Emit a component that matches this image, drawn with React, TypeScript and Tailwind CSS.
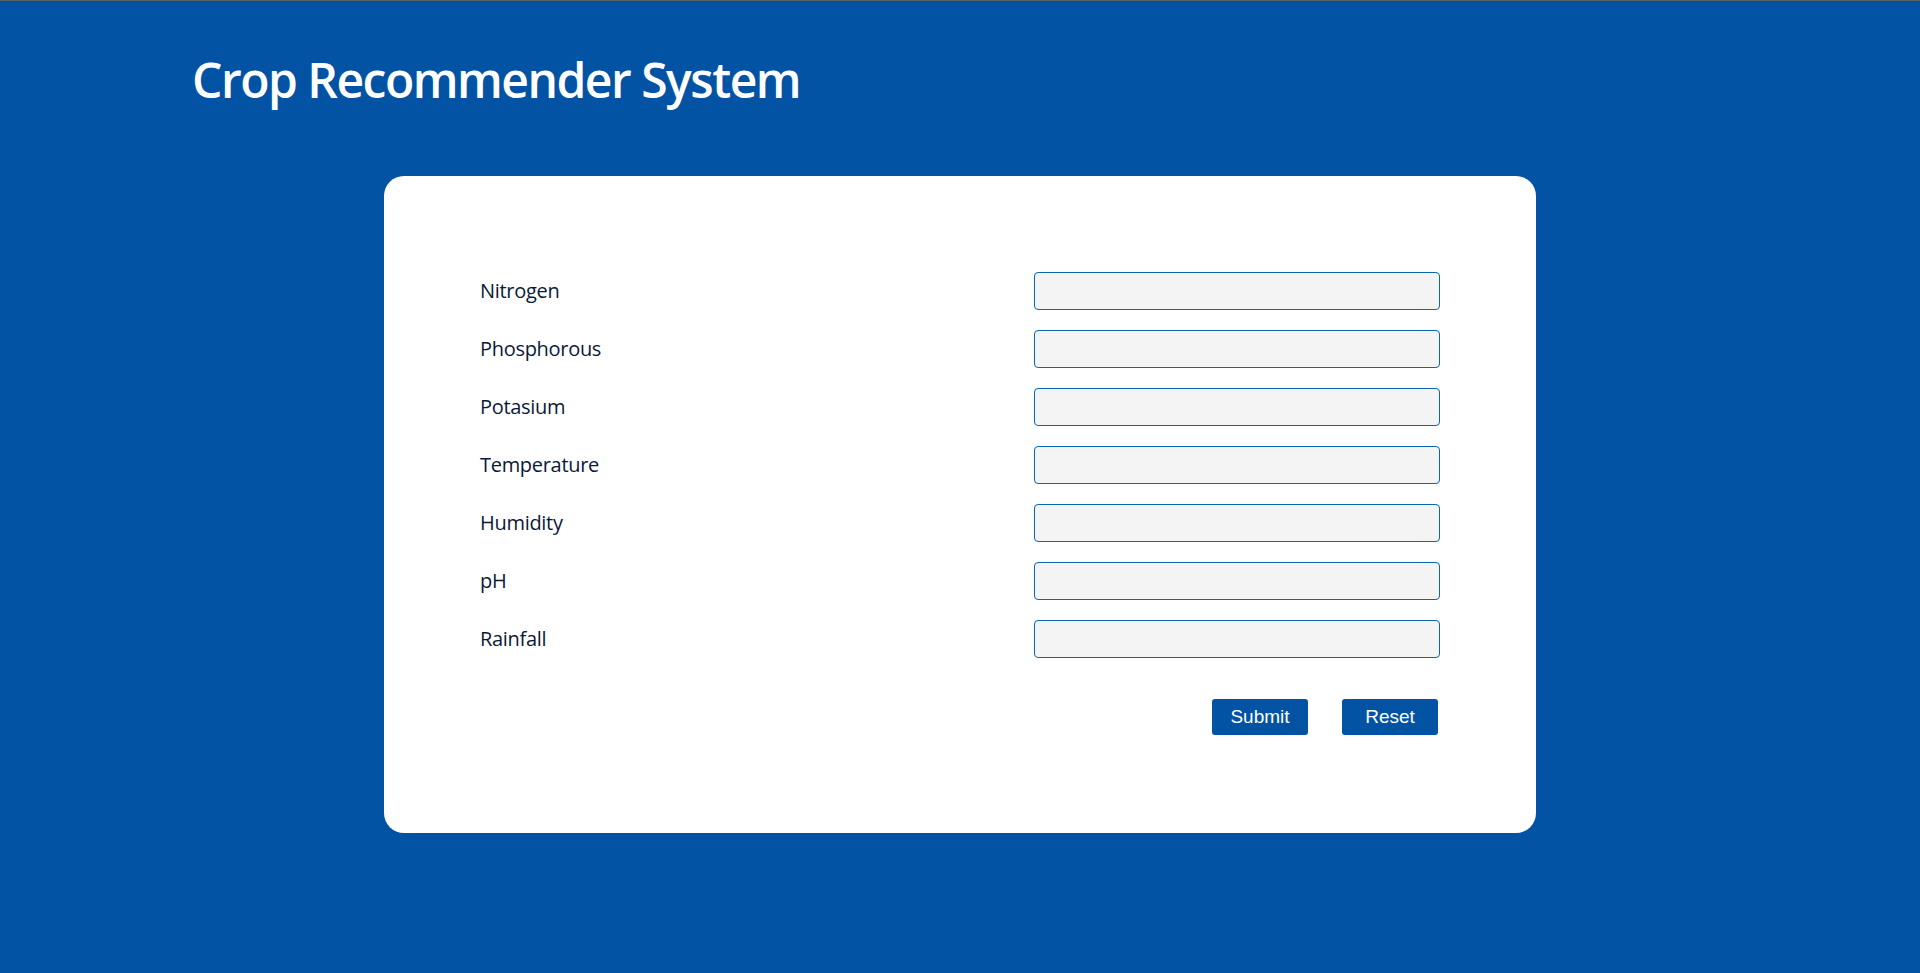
import React from "react";

const fields = ["Nitrogen", "Phosphorous", "Potasium", "Temperature", "Humidity", "pH", "Rainfall"];

export default function App() {
  return (
    <div className="min-h-[973px] w-full bg-[#0253a4] border-t border-[#5b5f66]" style={{ fontFamily: '"Open Sans", "Noto Sans", sans-serif' }}>
      <h1 className="pl-[192px] pt-[47px] text-[48px] font-semibold leading-[64px] text-white tracking-[-1.5px]" style={{ fontFamily: '"Open Sans", sans-serif' }}>
        Crop Recommender System
      </h1>
      <div className="mx-auto mt-[64px] w-[1152px] rounded-[20px] bg-white px-24 pt-24 pb-[98px]">
        <form className="flex flex-col gap-5">
          {fields.map((f) => (
            <div key={f} className="flex items-center justify-between">
              <label className="text-[20px] text-[#0b1938] tracking-[-0.3px]" style={{ fontFamily: '"Open Sans", sans-serif' }}>{f}</label>
              <input className="h-[38px] w-[406px] rounded-[4px] border border-[#0867ad] bg-[#f4f4f4] outline-none" />
            </div>
          ))}
          <div className="mt-[21px] flex justify-end gap-[34px] pr-[2px]">
            <button type="button" className="h-[36px] w-[96px] rounded-[3px] bg-[#0253a4] text-[19px] text-white" style={{ fontFamily: '"Liberation Sans", Arial, sans-serif' }}>Submit</button>
            <button type="button" className="h-[36px] w-[96px] rounded-[3px] bg-[#0253a4] text-[19px] text-white" style={{ fontFamily: '"Liberation Sans", Arial, sans-serif' }}>Reset</button>
          </div>
        </form>
      </div>
    </div>
  );
}
